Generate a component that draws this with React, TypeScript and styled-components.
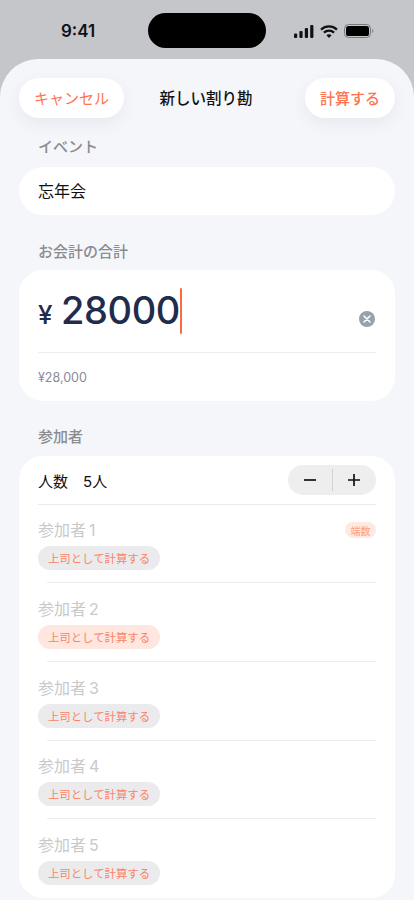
import React from "react";
import styled, { createGlobalStyle } from "styled-components";

const GlobalStyle = createGlobalStyle`
  html, body {
    margin: 0;
    padding: 0;
    background: #c5c6ca;
    font-family: Inter, "Noto Sans CJK JP", sans-serif;
  }
  * { box-sizing: border-box; }
`;

const Phone = styled.div`
  width: 414px;
  height: 900px;
  overflow: hidden;
  background: #c5c6ca;
`;

const StatusBar = styled.div`
  height: 59px;
  padding: 13px 0 0 61px;
  display: grid;
  grid-template-columns: 87px 118px auto;
  align-items: start;
`;

const Clock = styled.span`
  margin-top: 7px;
  font-size: 17px;
  line-height: 22px;
  font-weight: 600;
  color: #111;
`;

const Island = styled.div`
  height: 35px;
  border-radius: 18px;
  background: #000;
`;

const StatusIcons = styled.div`
  margin: 11px 0 0 28px;
  display: flex;
  align-items: center;
  gap: 6px;
`;

const Sheet = styled.main`
  height: 841px;
  padding: 19px 19px 0;
  border-radius: 38px 38px 0 0;
  background: #f5f6fa;
`;

const Header = styled.header`
  height: 40px;
  display: flex;
  align-items: center;
  justify-content: space-between;
`;

const HeaderButton = styled.div<{ $width: number; $strong?: boolean }>`
  width: ${({ $width }) => $width}px;
  height: 40px;
  padding-bottom: 2px;
  border-radius: 20px;
  display: flex;
  align-items: center;
  justify-content: center;
  background: #fff;
  color: #ff7350;
  font-size: 15px;
  font-weight: ${({ $strong }) => ($strong ? 500 : 400)};
  box-shadow: 0 6px 16px rgba(60, 65, 90, 0.07);
`;

const Title = styled.h1`
  margin: 2px 17px 0 0;
  font-size: 15.5px;
  line-height: 20px;
  font-weight: 500;
  color: #111;
`;

const SectionLabel = styled.h2<{ $top: number; $bottom: number }>`
  margin: ${({ $top }) => $top}px 0 ${({ $bottom }) => $bottom}px 19px;
  font-size: 15px;
  line-height: 20px;
  font-weight: 500;
  color: #8b8c91;
`;

const EventInput = styled.div`
  height: 48px;
  padding: 0 19px 2px;
  display: flex;
  align-items: center;
  border-radius: 24px;
  background: #fff;
  font-size: 16px;
  color: #111;
`;

const Card = styled.section`
  border-radius: 24px;
  background: #fff;
`;

const AmountCard = styled(Card)`
  height: 131px;
  padding: 18px 19px 0;
`;

const AmountRow = styled.div`
  position: relative;
  height: 46px;
  display: flex;
  align-items: baseline;
`;

const Yen = styled.span`
  width: 23px;
  font-size: 26px;
  line-height: 44px;
  font-weight: 500;
  color: #1f2c4c;
`;

const AmountValue = styled.span`
  font-size: 38px;
  line-height: 44px;
  font-weight: 500;
  letter-spacing: -0.4px;
  color: #1f2c4c;
`;

const Caret = styled.span`
  width: 2px;
  height: 46px;
  align-self: center;
  border-radius: 1px;
  background: #ff6a3d;
`;

const ClearButton = styled.span`
  position: absolute;
  right: 1px;
  top: 23px;
  width: 16px;
  height: 16px;
  border-radius: 50%;
  display: flex;
  align-items: center;
  justify-content: center;
  background: #98a0ad;
`;

const AmountDivider = styled.div`
  height: 1px;
  margin-top: 18px;
  background: #ededf0;
`;

const AmountHint = styled.div`
  margin-top: 17px;
  font-size: 12.5px;
  line-height: 16px;
  color: #878b9c;
`;

const ParticipantsCard = styled(Card)`
  height: 442px;
  padding: 9px 19px 0;
`;

const CountRow = styled.div`
  height: 40px;
  padding-bottom: 9px;
  display: flex;
  align-items: center;
  justify-content: space-between;
  border-bottom: 1px solid #ebebee;
`;

const CountLabel = styled.span`
  display: flex;
  gap: 15px;
  font-size: 15px;
  color: #111;
`;

const Stepper = styled.div`
  width: 88px;
  height: 30px;
  display: flex;
  align-items: center;
  border-radius: 15px;
  background: #eeeeef;
`;

const StepSide = styled.span`
  flex: 1;
  display: flex;
  align-items: center;
  justify-content: center;
`;

const StepDivider = styled.span`
  width: 1px;
  height: 22px;
  background: #d2d2d4;
`;

const ParticipantRow = styled.div`
  height: 78.75px;
  padding-top: 14px;
`;

const NameLine = styled.div`
  height: 22px;
  display: flex;
  align-items: flex-start;
  justify-content: space-between;
`;

const Name = styled.span`
  font-size: 16px;
  line-height: 22px;
  color: #c9c9cb;
`;

const NameNumber = styled.span`
  margin-left: 3px;
`;

const OddBadge = styled.span`
  width: 31px;
  height: 16px;
  margin-top: 3px;
  border-radius: 8px;
  display: flex;
  align-items: center;
  justify-content: center;
  background: #ffe9e3;
  color: #ff9c84;
  font-size: 10px;
`;

const BossPill = styled.span<{ $active?: boolean }>`
  width: 122px;
  height: 24px;
  margin-top: 5px;
  border-radius: 12px;
  display: flex;
  align-items: center;
  justify-content: center;
  background: ${({ $active }) => ($active ? "#ffe6df" : "#ebebed")};
  color: #fb8367;
  font-size: 11.4px;
`;

const RowDivider = styled.div`
  height: 1px;
  margin: 12px 0 0 9px;
  background: #ebebee;
`;

const participants = [
  { id: 1, odd: true },
  { id: 2, active: true },
  { id: 3 },
  { id: 4 },
  { id: 5 },
];

function SignalIcon() {
  return (
    <svg width="20" height="13" viewBox="0 0 20 13" fill="#111">
      <rect x="0" y="8.5" width="3.2" height="4.5" rx="1" />
      <rect x="5.4" y="6" width="3.2" height="7" rx="1" />
      <rect x="10.8" y="3" width="3.2" height="10" rx="1" />
      <rect x="16.2" y="0" width="3.2" height="13" rx="1" />
    </svg>
  );
}

function WifiIcon() {
  return (
    <svg width="18" height="13" viewBox="0 0 18 13" fill="none" stroke="#111" strokeWidth="2.2">
      <path d="M1 4.6C5.6 0.4 12.4 0.4 17 4.6" />
      <path d="M3.9 7.6C6.8 5 11.2 5 14.1 7.6" />
      <path d="M9 13L6.4 10.2C7.9 8.9 10.1 8.9 11.6 10.2Z" fill="#111" stroke="none" />
    </svg>
  );
}

function BatteryIcon() {
  return (
    <svg width="30" height="14" viewBox="0 0 30 14">
      <rect x="0.5" y="0.5" width="26" height="13" rx="4" fill="none" stroke="#77787c" />
      <rect x="2" y="2" width="23" height="10" rx="2.6" fill="#000" />
      <path d="M28 5v4c.8-.3 1.400-1.100 1.400-2S28.800 5.300 28 5z" fill="#8a8b8f" />
    </svg>
  );
}

export default function App() {
  return (
    <Phone>
      <GlobalStyle />
      <StatusBar>
        <Clock>9:41</Clock>
        <Island />
        <StatusIcons>
          <SignalIcon />
          <WifiIcon />
          <BatteryIcon />
        </StatusIcons>
      </StatusBar>
      <Sheet>
        <Header>
          <HeaderButton $width={105}>キャンセル</HeaderButton>
          <Title>新しい割り勘</Title>
          <HeaderButton $width={90} $strong>計算する</HeaderButton>
        </Header>
        <SectionLabel $top={19} $bottom={10}>イベント</SectionLabel>
        <EventInput>忘年会</EventInput>
        <SectionLabel $top={27} $bottom={8}>お会計の合計</SectionLabel>
        <AmountCard>
          <AmountRow>
            <Yen>¥</Yen>
            <AmountValue>28000</AmountValue>
            <Caret />
            <ClearButton>
              <svg width="8" height="8" viewBox="0 0 8 8" stroke="#fff" strokeWidth="1.6" strokeLinecap="round">
                <path d="M1 1l6 6M7 1L1 7" />
              </svg>
            </ClearButton>
          </AmountRow>
          <AmountDivider />
          <AmountHint>¥28,000</AmountHint>
        </AmountCard>
        <SectionLabel $top={26} $bottom={9}>参加者</SectionLabel>
        <ParticipantsCard>
          <CountRow>
            <CountLabel>
              <span>人数</span>
              <span>5人</span>
            </CountLabel>
            <Stepper>
              <StepSide>
                <svg width="14" height="14" viewBox="0 0 14 14" stroke="#111" strokeWidth="1.7">
                  <path d="M1 7h12" />
                </svg>
              </StepSide>
              <StepDivider />
              <StepSide>
                <svg width="14" height="14" viewBox="0 0 14 14" stroke="#111" strokeWidth="1.7">
                  <path d="M1 7h12M7 1v12" />
                </svg>
              </StepSide>
            </Stepper>
          </CountRow>
          {participants.map((p, i) => (
            <ParticipantRow key={p.id}>
              <NameLine>
                <Name>
                  参加者<NameNumber>{p.id}</NameNumber>
                </Name>
                {p.odd && <OddBadge>端数</OddBadge>}
              </NameLine>
              <BossPill $active={p.active}>上司として計算する</BossPill>
              {i < participants.length - 1 && <RowDivider />}
            </ParticipantRow>
          ))}
        </ParticipantsCard>
      </Sheet>
    </Phone>
  );
}
